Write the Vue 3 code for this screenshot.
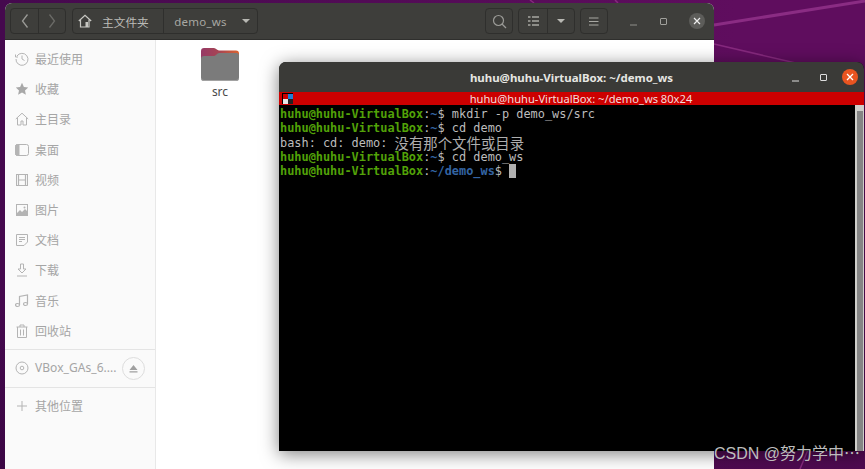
<script setup>
const places = [
  { label: '最近使用', icon: 'clock' }, { label: '收藏', icon: 'star' }, { label: '主目录', icon: 'home' },
  { label: '桌面', icon: 'desk' }, { label: '视频', icon: 'film' }, { label: '图片', icon: 'pic' },
  { label: '文档', icon: 'doc' }, { label: '下载', icon: 'down' }, { label: '音乐', icon: 'music' },
  { label: '回收站', icon: 'trash' },
]
const lines = [
  { prompt: '~$', cmd: ' mkdir -p demo_ws/src' },
  { prompt: '~$', cmd: ' cd demo' },
  { plain: 'bash: cd: demo: ', cjk: '没有那个文件或目录' },
  { prompt: '~$', cmd: ' cd demo_ws' },
  { prompt: '~/demo_ws$', cmd: ' ', cursor: true },
]
</script>

<template>
  <div class="desktop">
    <svg class="wall" viewBox="0 0 865 469" preserveAspectRatio="none">
      <path d="M714 25L865 1" stroke="#8a2c83" stroke-width="3" fill="none"/>
      <path d="M714 44L800 64M530 0L534 3M615 0L618 3M800 469L812 440" stroke="#86297e" stroke-width="1.500" fill="none"/>
    </svg>

    <section class="files">
      <header class="hb">
        <div class="group">
          <button class="btn nav"><svg width="10" height="16" viewBox="0 0 10 16"><path d="M7.500 1.500L2.500 8l5 6.500" fill="none" stroke="#9a9a96" stroke-width="1.300"/></svg></button>
          <button class="btn nav"><svg width="10" height="16" viewBox="0 0 10 16"><path d="M2.500 1.500l5 6.500-5 6.500" fill="none" stroke="#6b6b67" stroke-width="1.300"/></svg></button>
        </div>
        <div class="group path">
          <button class="btn crumb home">
            <svg width="14" height="14" viewBox="0 0 14 14"><path d="M.8 7L7 1.200 13.200 7M2.500 5.800V13H11V5.800" fill="none" stroke="#c8c8c3" stroke-width="1.200"/><rect x="7.500" y="8" width="2.500" height="5" fill="#c8c8c3"/></svg>
            <span>主文件夹</span>
          </button>
          <button class="btn crumb cur"><span>demo_ws</span><i class="caret"></i></button>
        </div>
        <div class="spacer"></div>
        <button class="btn square"><svg width="15" height="15" viewBox="0 0 15 15"><circle cx="6.500" cy="6.500" r="5" fill="none" stroke="#9a9a96" stroke-width="1.200"/><path d="M10 10l4 4" stroke="#9a9a96" stroke-width="1.300"/></svg></button>
        <div class="group tools">
          <button class="btn square"><svg width="11" height="10" viewBox="0 0 11 10"><path d="M0 1h2.500M0 5h2.500M0 9h2.500M4 1h7M4 5h7M4 9h7" stroke="#a8a8a3" stroke-width="1.500"/></svg></button>
          <button class="btn narrow"><i class="caret"></i></button>
        </div>
        <button class="btn square"><svg width="10" height="9" viewBox="0 0 10 9"><path d="M0 1h9.500M0 4.500h9.500M0 8h9.500" stroke="#a8a8a3"/></svg></button>
        <div class="wm">
          <svg width="9" height="9" viewBox="0 0 9 9"><path d="M1 8h7" stroke="#8f8f8b"/></svg>
          <svg width="9" height="9" viewBox="0 0 9 9"><rect x="1.500" y="1.500" width="6" height="6" rx=".5" fill="none" stroke="#a0a09c"/></svg>
          <span class="close grey"><svg width="8" height="8" viewBox="0 0 8 8"><path d="M1 1l6 6M7 1L1 7" stroke="#eee" stroke-width="1.200"/></svg></span>
        </div>
      </header>
      <div class="fbody">
        <aside class="side">
          <nav class="plist">
            <div v-for="p in places" :key="p.label" class="place">
              <svg class="pi" width="14" height="14" viewBox="0 0 14 14" fill="none" stroke="#b4b4b4" stroke-width="1">
                <template v-if="p.icon === 'clock'"><path d="M2 4A6 6 0 1 1 1 7"/><path d="M7 3.500V7l2.500 1.500M.5 2.500V5H3"/></template>
                <path v-else-if="p.icon === 'star'" d="M7 .8l1.900 4.100 4.300.5-3.200 3 .9 4.400L7 10.600l-3.900 2.200.9-4.400-3.200-3 4.300-.5z" fill="#a8a8a8" stroke="none"/>
                <path v-else-if="p.icon === 'home'" d="M.8 7L7 1.200 13.200 7M2.500 6v7H6V9h2v4h3.500V6"/>
                <template v-else-if="p.icon === 'desk'"><rect x=".5" y="1.500" width="13" height="11" rx="2"/><path d="M.5 3.500a2 2 0 0 1 2-2H4v11H2.500a2 2 0 0 1-2-2z" fill="#b4b4b4"/></template>
                <template v-else-if="p.icon === 'film'"><rect x="1.500" y="1.500" width="11" height="11"/><path d="M3.500 1.500v11M10.500 1.500v11M3.500 7h7" stroke-width="1.200"/></template>
                <template v-else-if="p.icon === 'pic'"><rect x="1.500" y="1.500" width="11" height="11"/><path d="M2 10l3-3 2 2 3-3 2 2v4H2z" fill="#b4b4b4" stroke="none"/><circle cx="9.500" cy="4.500" r="1" fill="#b4b4b4" stroke="none"/></template>
                <path v-else-if="p.icon === 'doc'" d="M1.500 1.500h11V9l-3.500 3.500H1.500zM4 4.500h6M4 6.500h6M4 8.500h3"/>
                <path v-else-if="p.icon === 'down'" d="M5.500 1h3v5H11L7 10 3 6h2.500zM2 13h10"/>
                <path v-else-if="p.icon === 'music'" d="M4.500 11V2.500l8-1.500v9M4.500 11a2 1.500 0 1 1-4 0 2 1.500 0 1 1 4 0zM12.500 10a2 1.500 0 1 1-4 0 2 1.500 0 1 1 4 0z" stroke-width="1.200"/>
                <path v-else d="M1.500 3h11M5 3V1h4v2M2.500 3v10.500h9V3M5.500 5.500v6M8.500 5.500v6"/>
              </svg>
              <span>{{ p.label }}</span>
            </div>
          </nav>
          <div class="rule first"></div>
          <div class="place dev">
            <svg class="pi" width="14" height="14" viewBox="0 0 14 14" fill="none" stroke="#b4b4b4"><circle cx="7" cy="7" r="6"/><circle cx="7" cy="7" r="1.800"/></svg>
            <span class="devname">VBox_GAs_6....</span>
            <span class="eject"><svg width="9" height="9" viewBox="0 0 9 9"><path d="M4.500 1L8.500 6H.5z M.5 7.200h8V8.500h-8z" fill="#a0a0a0"/></svg></span>
          </div>
          <div class="rule"></div>
          <div class="place other">
            <svg class="pi" width="14" height="14" viewBox="0 0 14 14"><path d="M7 2v10M2 7h10" stroke="#b4b4b4"/></svg>
            <span>其他位置</span>
          </div>
        </aside>
        <main class="view">
          <div class="item">
            <svg width="38" height="34" viewBox="0 0 38 34">
              <defs><linearGradient id="fold" x1="0" x2="1" y1="0" y2="0"><stop offset="0" stop-color="#963a66"/><stop offset=".5" stop-color="#a84552"/><stop offset="1" stop-color="#dc6430"/></linearGradient></defs>
              <path d="M0 4a3 3 0 0 1 3-3h10c2 0 3 2.500 5 2.500h17a3 3 0 0 1 3 3V16H0z" fill="url(#fold)"/>
              <path d="M0 12a3 3 0 0 1 3-3h10c2 0 3-3 5-3h17.500a2.500 2.500 0 0 1 2.500 2.500V31a3 3 0 0 1-3 3H3a3 3 0 0 1-3-3z" fill="#7b7b7b"/>
              <path d="M0 31a3 3 0 0 0 3 3h32a3 3 0 0 0 3-3v-.5a3 3 0 0 1-3 2.500H3a3 3 0 0 1-3-2.500z" fill="#a2a2a2"/>
            </svg>
            <span>src</span>
          </div>
        </main>
      </div>
    </section>

    <section class="term">
      <header class="tt">
        <span class="tt-title">huhu@huhu-VirtualBox: ~/demo_ws</span>
        <div class="wm twm">
          <svg width="9" height="9" viewBox="0 0 9 9"><path d="M1 8h7" stroke="#ddd"/></svg>
          <svg width="9" height="9" viewBox="0 0 9 9"><rect x="1.500" y="1.500" width="6" height="6" rx=".5" fill="none" stroke="#ddd"/></svg>
          <span class="close orange"><svg width="8" height="8" viewBox="0 0 8 8"><path d="M1 1l6 6M7 1L1 7" stroke="#fff" stroke-width="1.300"/></svg></span>
        </div>
      </header>
      <div class="redbar">
        <span class="quad"><i class="q1"></i><i class="q2"></i><i class="q3"></i><i class="q4"></i></span>
        <span class="rtitle">huhu@huhu-VirtualBox: ~/demo_ws 80x24</span>
      </div>
      <div class="screen">
        <pre class="out"><template v-for="(l, i) in lines" :key="i"><div class="ln"><template v-if="l.plain">{{ l.plain }}<span class="cjk">{{ l.cjk }}</span></template><template v-else><b class="g">huhu@huhu-VirtualBox</b>:<b class="b">{{ l.prompt.slice(0, -1) }}</b>{{ l.prompt.slice(-1) }}{{ l.cmd }}<i v-if="l.cursor" class="cursor"></i></template></div></template></pre>
        <div class="scroll"><i class="arrow"></i><i class="thumb"></i></div>
      </div>
    </section>

    <div class="wm-mark">CSDN @努力学中⋯</div>
  </div>
</template>

<style>
html, body { margin: 0; overflow: hidden; }
</style>

<style scoped>
.desktop { position: relative; width: 865px; height: 469px; overflow: hidden; background: linear-gradient(180deg, transparent 65%, rgba(30,0,40,.25)), linear-gradient(90deg, #45094e, #5f0d5e 85%); font-family: "Noto Sans CJK SC", "Noto Sans", sans-serif; }
.wall { position: absolute; inset: 0; width: 100%; height: 100%; }
.files { position: absolute; left: 5px; top: 3px; width: 709px; height: 466px; display: flex; flex-direction: column; border-radius: 7px 7px 0 0; overflow: hidden; background: #fff; }
.hb { height: 37px; flex: none; display: flex; align-items: center; gap: 6px; padding: 0 9.500px 0 5px; background: #3e3e3b; box-sizing: border-box; border-bottom: 1px solid #2f2f2d; }
.group { display: flex; border: 1px solid #2f2f2d; border-radius: 4px; height: 26px; box-sizing: border-box; }
.btn { background: none; border: 0; padding: 0; margin: 0; color: #bcbcb7; font: inherit; display: flex; align-items: center; justify-content: center; height: 24px; box-sizing: border-box; }
.btn + .btn { border-left: 1px solid #2f2f2d; }
.nav { width: 27px; }
.crumb { font-size: 11.700px; }
.home { width: 90px; justify-content: flex-start; padding-left: 5px; gap: 10px; }
.cur { width: 94px; gap: 15px; color: #a8a8a3; font-family: "Noto Sans", sans-serif; font-size: 11.500px; letter-spacing: .2px; padding-left: 3px; }
.spacer { flex: 1; }
.square { width: 28px; height: 26px; border: 1px solid #2f2f2d; border-radius: 4px; margin-left: -1px; }
.tools { margin-left: -1px; }
.tools .square { border: 0; height: 24px; margin: 0; }
.narrow { width: 27px; }
.caret { width: 0; height: 0; border: 4px solid transparent; border-top: 4.500px solid #b8b8b3; border-bottom: 0; }
.wm { display: flex; align-items: center; gap: 21px; margin-left: 14.500px; }
.close { width: 16px; height: 16px; border-radius: 50%; display: flex; align-items: center; justify-content: center; }
.close.grey { background: #5d5d5a; }
.close.orange { background: #e95420; margin-left: -4.500px; }
.fbody { flex: 1; display: flex; min-height: 0; background: #fff; }
.side { width: 150px; flex: none; border-right: 1px solid #e8e8e8; background: #fafafa; color: #a5a5a5; font-size: 12px; padding-top: 4px; }
.place { height: 30.200px; display: flex; align-items: center; gap: 6px; padding-left: 10px; }
.place span { line-height: 1; }
.pi { flex: none; }
.rule { height: 1px; background: #e4e4e4; }
.rule.first { margin-top: 3px; }
.place.dev { height: 37px; font-family: "Noto Sans", sans-serif; letter-spacing: .05px; }
.devname { width: 80px; white-space: nowrap; }
.eject { width: 21px; height: 21px; border: 1px solid #ddd; border-radius: 50%; display: flex; align-items: center; justify-content: center; margin-left: 1px; }
.other { margin-top: 3px; }
.view { flex: 1; padding: 7px 0 0 45px; }
.item { display: flex; flex-direction: column; align-items: center; gap: 2px; font: 12px "Noto Sans", sans-serif; color: #4a4a4a; width: 38px; }
.term { position: absolute; left: 279px; top: 62px; width: 585px; height: 389px; display: flex; flex-direction: column; background: #000; border-radius: 7px 7px 0 0; overflow: hidden; box-shadow: 0 3px 18px rgba(0,0,0,.5); }
.tt { height: 30px; flex: none; position: relative; display: flex; align-items: center; justify-content: center; background: #3a3a37; }
.tt-title { font: 700 11.450px "Noto Sans", sans-serif; color: #e6e6e2; }
.twm { position: absolute; right: 6px; top: 7px; margin: 0; gap: 19px; }
.redbar { height: 13px; flex: none; position: relative; display: flex; align-items: center; justify-content: center; background: #cc0000; }
.rtitle { font: 11.150px/13px "Noto Sans", sans-serif; color: #f4dcdc; margin-left: 19px; }
.quad { position: absolute; left: 3px; top: 1px; width: 11px; height: 11px; display: grid; grid-template-columns: 5px 5px; grid-auto-rows: 5px; padding: .5px; box-sizing: border-box; background: #000; }
.quad i { display: block; }
.q1 { background: #cc0000; } .q2 { background: #1f7fd6; } .q3 { background: #e6e6e6; } .q4 { background: #222; }
.screen { flex: 1; display: flex; min-height: 0; }
.out { flex: 1; margin: 0; padding: 2px 0 0 1px; color: #bdbdbd; font: 11.900px/14.250px "DejaVu Sans Mono", "Noto Sans CJK SC", monospace; }
.ln { height: 14.250px; white-space: pre; }
.cjk { display: inline-block; font: 14.400px/14px "Noto Sans CJK SC", sans-serif; vertical-align: top; color: #aeaeae; }
.g { color: #52a208; font-weight: 700; }
.b { color: #3465a4; font-weight: 700; }
.cursor { display: inline-block; width: 7px; height: 14px; background: #b0b0b0; vertical-align: -3px; }
.scroll { width: 9px; flex: none; background: #cfcfcb; display: flex; flex-direction: column; padding: 0 1.500px; box-sizing: border-box; }
.arrow { display: block; height: 6px; flex: none; }
.thumb { display: block; flex: 1; background: #858585; }
.wm-mark { position: absolute; right: 5px; bottom: 5px; font: 16px "Liberation Sans", "Noto Sans CJK SC", sans-serif; color: #bdbdbd; white-space: nowrap; }
</style>
